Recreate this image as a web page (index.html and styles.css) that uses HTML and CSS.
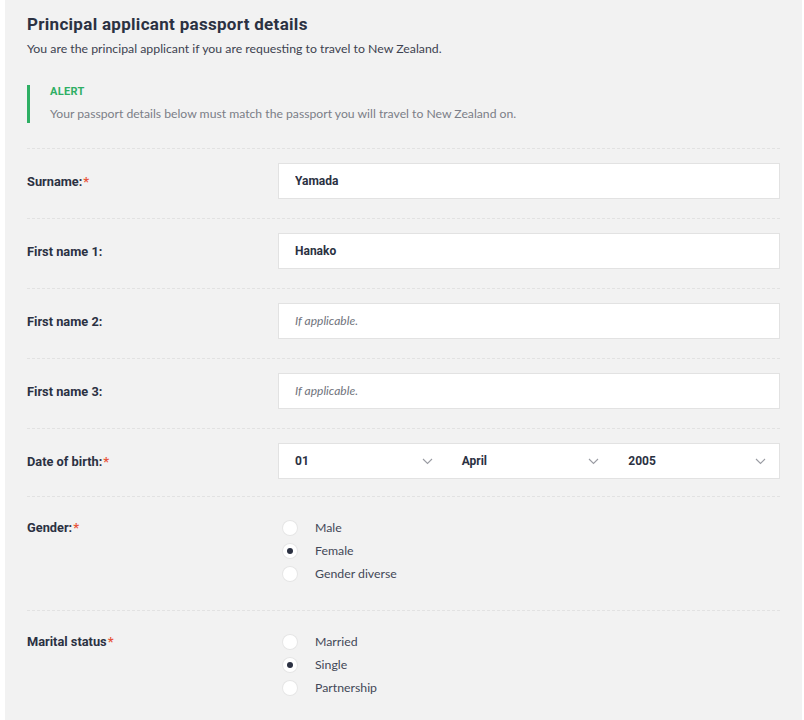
FILE: index.html
```html
<!DOCTYPE html>
<html lang="en">
<head>
<meta charset="UTF-8">
<meta name="viewport" content="width=device-width, initial-scale=1.0">
<title>Principal applicant passport details</title>
<link rel="stylesheet" href="styles.css">
</head>
<body>
<div class="page">
<h2 class="title">Principal applicant passport details</h2>
<p class="intro">You are the principal applicant if you are requesting to travel to New Zealand.</p>

<div class="alert">
<div class="alert-title">ALERT</div>
<div class="alert-text">Your passport details below must match the passport you will travel to New Zealand on.</div>
</div>

<div class="form">
<div class="row">
<label class="label" for="surname">Surname:<span class="req">*</span></label>
<input class="field" id="surname" type="text" value="Yamada">
</div>
<div class="row">
<label class="label" for="first1">First name 1:</label>
<input class="field" id="first1" type="text" value="Hanako">
</div>
<div class="row">
<label class="label" for="first2">First name 2:</label>
<input class="field" id="first2" type="text" placeholder="If applicable.">
</div>
<div class="row">
<label class="label" for="first3">First name 3:</label>
<input class="field" id="first3" type="text" placeholder="If applicable.">
</div>
<div class="row row-date">
<label class="label">Date of birth:<span class="req">*</span></label>
<div class="date">
<div class="select"><span>01</span><svg width="11" height="7" viewBox="0 0 11 7"><path d="M1 1l4.5 4.5L10 1" fill="none" stroke="#9a9ca3" stroke-width="1.1"/></svg></div>
<div class="select"><span>April</span><svg width="11" height="7" viewBox="0 0 11 7"><path d="M1 1l4.5 4.5L10 1" fill="none" stroke="#9a9ca3" stroke-width="1.1"/></svg></div>
<div class="select"><span>2005</span><svg width="11" height="7" viewBox="0 0 11 7"><path d="M1 1l4.5 4.5L10 1" fill="none" stroke="#9a9ca3" stroke-width="1.1"/></svg></div>
</div>
</div>
<div class="row row-radio">
<label class="label label-top">Gender:<span class="req">*</span></label>
<div class="radios">
<label class="radio"><span class="dot"></span>Male</label>
<label class="radio"><span class="dot checked"></span>Female</label>
<label class="radio"><span class="dot"></span>Gender diverse</label>
</div>
</div>
<div class="row row-radio">
<label class="label label-top">Marital status<span class="req">*</span></label>
<div class="radios">
<label class="radio"><span class="dot"></span>Married</label>
<label class="radio"><span class="dot checked"></span>Single</label>
<label class="radio"><span class="dot"></span>Partnership</label>
</div>
</div>
</div>
</div>
</body>
</html>
```

FILE: styles.css
```css
body {
margin: 0;
background-color: #fff;
font-family: Lato, "Liberation Sans", sans-serif;
color: #2b3142;
}
.page {
margin: 0 2px 0 5px;
min-height: 720px;
padding: 14px 22px 0 22px;
background-color: #f2f2f2;
box-sizing: border-box;
}
.title {
margin: 0;
font-family: Roboto, sans-serif;
font-size: 17px;
line-height: 20px;
font-weight: 700;
letter-spacing: 0.3px;
color: #2b3142;
}
.intro {
margin: 5px 0 0;
font-size: 12.3px;
line-height: 20px;
color: #3d4250;
}
.alert {
margin-top: 26px;
padding-left: 20px;
border-left: 3px solid #2eaf64;
}
.alert-title {
font-family: Roboto, sans-serif;
font-size: 11px;
font-weight: 700;
line-height: 14px;
letter-spacing: 0.3px;
color: #2eaf64;
}
.alert-text {
margin-top: 6px;
font-size: 12.2px;
line-height: 18px;
color: #7b7e87;
}
.form {
margin-top: 25px;
}
.row {
display: grid;
grid-template-columns: 251px 1fr;
align-items: center;
padding: 14px 0 19px;
border-top: 1px dashed #e2e2e2;
}
.row-date {
padding-bottom: 17px;
}
.label {
font-family: Roboto, sans-serif;
font-size: 12.8px;
font-weight: 700;
color: #2b3142;
}
.req {
color: #e8553b;
margin-left: 1px;
}
.field {
height: 36px;
padding: 0 16px;
border: 1px solid #e2e2e2;
background-color: #fff;
box-sizing: border-box;
font-family: Roboto, sans-serif;
font-size: 12px;
font-weight: 700;
color: #2b3142;
outline: none;
}
.field::placeholder {
font-family: Lato, sans-serif;
font-weight: 400;
font-style: italic;
color: #6f737c;
}
.date {
display: grid;
grid-template-columns: repeat(3, 1fr);
height: 36px;
border: 1px solid #e2e2e2;
background-color: #fff;
box-sizing: border-box;
}
.select {
display: flex;
justify-content: space-between;
align-items: center;
padding: 0 13px 0 16px;
font-family: Roboto, sans-serif;
font-size: 12px;
font-weight: 700;
}
.row-radio {
align-items: start;
padding: 19px 0 25px;
}
.label-top {
line-height: 23px;
}
.radios {
display: flex;
flex-direction: column;
}
.radio {
display: flex;
align-items: center;
height: 23px;
font-size: 12.3px;
color: #434857;
}
.dot {
width: 14px;
height: 14px;
margin: 0 18px 0 5px;
border-radius: 50%;
background-color: #fff;
box-shadow: 0 0 0 1px #e6e6e6;
display: flex;
align-items: center;
justify-content: center;
}
.dot.checked::after {
content: "";
width: 6px;
height: 6px;
border-radius: 50%;
background-color: #2b3142;
}
```
